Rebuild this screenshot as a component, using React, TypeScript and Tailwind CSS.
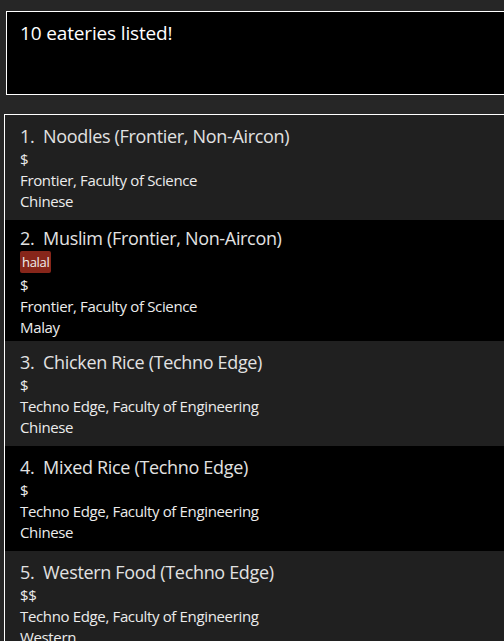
import React from "react";

type Eatery = {
  name: string;
  price: string;
  location: string;
  cuisine: string;
  tags?: string[];
};

const EATERIES: Eatery[] = [
  { name: "Noodles (Frontier, Non-Aircon)", price: "$", location: "Frontier, Faculty of Science", cuisine: "Chinese" },
  { name: "Muslim (Frontier, Non-Aircon)", price: "$", location: "Frontier, Faculty of Science", cuisine: "Malay", tags: ["halal"] },
  { name: "Chicken Rice (Techno Edge)", price: "$", location: "Techno Edge, Faculty of Engineering", cuisine: "Chinese" },
  { name: "Mixed Rice (Techno Edge)", price: "$", location: "Techno Edge, Faculty of Engineering", cuisine: "Chinese" },
  { name: "Western Food (Techno Edge)", price: "$$", location: "Techno Edge, Faculty of Engineering", cuisine: "Western" },
];

const EateryCard = ({ eatery, index }: { eatery: Eatery; index: number }) => {
  const odd = index % 2 === 1;
  const hasTags = !!eatery.tags?.length;
  return (
    <div
      className={
        (odd ? "bg-black " : "bg-[#202020] ") +
        (hasTags ? "pt-[5px] pb-[3px] " : "pt-[8px] pb-[8px] ") +
        "pl-[15px]"
      }
    >
      <div className="h-[26px] text-[18px] leading-[26px] tracking-[-0.33px] text-[#e2e2e2] whitespace-pre">
        {index + 1}.  {eatery.name}
      </div>
      {hasTags && (
        <div className="flex gap-1 h-[24px]">
          {eatery.tags!.map((tag) => (
            <span
              key={tag}
              className="h-[22px] px-[2px] rounded-[2px] bg-[#87261a] text-[13px] leading-[22px] tracking-[-0.3px] text-[#f0f0f0]"
            >
              {tag}
            </span>
          ))}
        </div>
      )}
      <div className="text-[15px] leading-[21px] tracking-[-0.35px] text-[#ececec]">
        <div>{eatery.price}</div>
        <div>{eatery.location}</div>
        <div>{eatery.cuisine}</div>
      </div>
    </div>
  );
};

export default function App() {
  return (
    <div
      className="w-[504px] h-[641px] overflow-hidden bg-[#262626] pt-[11px]"
      style={{ fontFamily: '"Open Sans", "Noto Sans", sans-serif' }}
    >
      {/* Result display */}
      <div className="ml-[6px] w-[520px] h-[84px] border border-white bg-black pl-[13px] pt-[7px]">
        <div className="text-[19px] leading-[28px] tracking-[-0.15px] text-white">10 eateries listed!</div>
      </div>

      {/* Eatery list */}
      <div className="ml-[4px] mt-[19px] w-[520px] border-t border-l border-white">
        {EATERIES.map((e, i) => (
          <EateryCard key={i} eatery={e} index={i} />
        ))}
      </div>
    </div>
  );
}
